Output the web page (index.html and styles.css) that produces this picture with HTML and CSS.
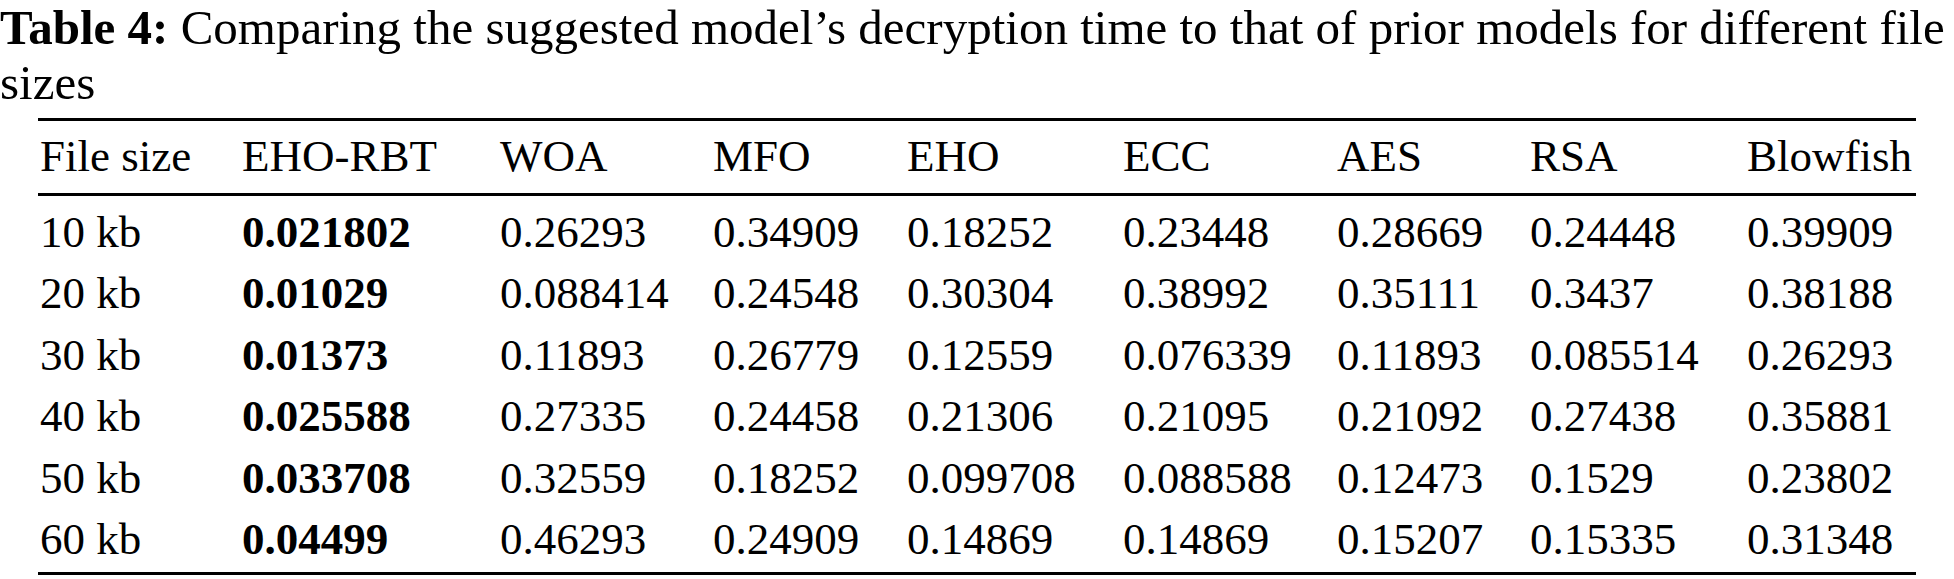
FILE: index.html
```html
<!DOCTYPE html>
<html lang="en">
<head>
<meta charset="utf-8">
<title>Table 4</title>
<link rel="stylesheet" href="styles.css">
</head>
<body>
<div class="page">
  <p class="caption"><span class="cap-line"><b>Table 4:</b> Comparing the suggested model’s decryption time to that of prior models for different file</span><br>sizes</p>
  <table class="tbl">
    <colgroup>
      <col class="c1"><col class="c2"><col class="c3"><col class="c4"><col class="c5"><col class="c6"><col class="c7"><col class="c8"><col class="c9">
    </colgroup>
    <thead>
      <tr><th>File size</th><th>EHO-RBT</th><th>WOA</th><th>MFO</th><th>EHO</th><th>ECC</th><th>AES</th><th>RSA</th><th>Blowfish</th></tr>
    </thead>
    <tbody>
      <tr><td>10 kb</td><td class="best">0.021802</td><td>0.26293</td><td>0.34909</td><td>0.18252</td><td>0.23448</td><td>0.28669</td><td>0.24448</td><td>0.39909</td></tr>
      <tr><td>20 kb</td><td class="best">0.01029</td><td>0.088414</td><td>0.24548</td><td>0.30304</td><td>0.38992</td><td>0.35111</td><td>0.3437</td><td>0.38188</td></tr>
      <tr><td>30 kb</td><td class="best">0.01373</td><td>0.11893</td><td>0.26779</td><td>0.12559</td><td>0.076339</td><td>0.11893</td><td>0.085514</td><td>0.26293</td></tr>
      <tr><td>40 kb</td><td class="best">0.025588</td><td>0.27335</td><td>0.24458</td><td>0.21306</td><td>0.21095</td><td>0.21092</td><td>0.27438</td><td>0.35881</td></tr>
      <tr><td>50 kb</td><td class="best">0.033708</td><td>0.32559</td><td>0.18252</td><td>0.099708</td><td>0.088588</td><td>0.12473</td><td>0.1529</td><td>0.23802</td></tr>
      <tr><td>60 kb</td><td class="best">0.04499</td><td>0.46293</td><td>0.24909</td><td>0.14869</td><td>0.14869</td><td>0.15207</td><td>0.15335</td><td>0.31348</td></tr>
    </tbody>
  </table>
</div>
</body>
</html>
```

FILE: styles.css
```css
html, body {
  margin: 0;
  padding: 0;
  background: #ffffff;
}

body {
  font-family: "Liberation Serif", "Times New Roman", serif;
  font-size: 45px;
  color: #000000;
}

.page {
  width: 1954px;
  height: 579px;
  overflow: hidden;
}

.caption {
  margin: 0;
  font-size: 49px;
  line-height: 55px;
}

.cap-line {
  white-space: nowrap;
}

.tbl {
  margin: 8px 0 0 38px;
  border-collapse: separate;
  border-spacing: 0;
  table-layout: fixed;
  width: 1878px;
  border-top: 3px solid #000000;
  border-bottom: 3px solid #000000;
}

.c1 { width: 204px; }
.c2 { width: 258px; }
.c3 { width: 213px; }
.c4 { width: 194px; }
.c5 { width: 216px; }
.c6 { width: 214px; }
.c7 { width: 193px; }
.c8 { width: 217px; }
.c9 { width: 169px; }

.tbl th,
.tbl td {
  padding: 0;
  text-align: left;
  font-weight: normal;
  line-height: 61.4px;
  white-space: nowrap;
  vertical-align: top;
}

.tbl th:first-child,
.tbl td:first-child {
  padding-left: 2px;
}

.tbl th {
  padding-top: 5px;
  padding-bottom: 6px;
  border-bottom: 3px solid #000000;
}

.tbl tbody tr:first-child td {
  padding-top: 5.6px;
}

.tbl tbody tr:last-child td {
  padding-bottom: 2px;
}

.tbl td.best {
  font-weight: bold;
}
```
